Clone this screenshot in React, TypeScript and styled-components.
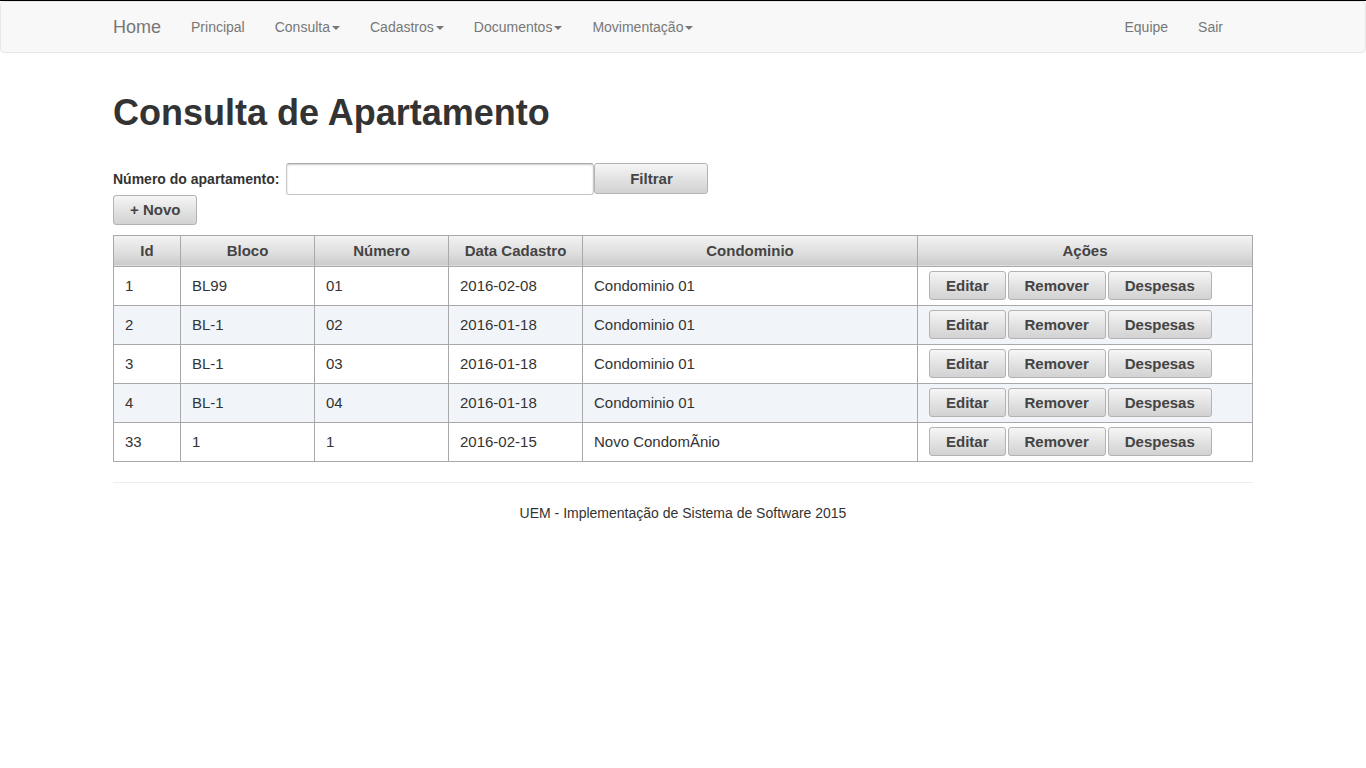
import React from "react";
import styled, { createGlobalStyle } from "styled-components";

const Global = createGlobalStyle`
  html, body { margin: 0; padding: 0; background: #fff; }
  body {
    border-top: 1px solid #000;
    font-family: "Liberation Sans", Arial, Helvetica, sans-serif;
    font-size: 14px;
    line-height: 1.42857;
    color: #333;
  }
  * { box-sizing: border-box; }
`;

const Navbar = styled.nav`
  height: 52px;
  background: #f8f8f8;
  border: 1px solid #e7e7e7;
  border-radius: 4px;
  margin-bottom: 20px;
`;

const NavInner = styled.div`
  width: 1170px;
  margin: 0 auto;
  padding: 0 15px;
  display: flex;
  align-items: center;
  height: 50px;
`;

const Brand = styled.a`
  font-size: 18px;
  line-height: 20px;
  color: #777;
  padding: 15px 15px 15px 0;
`;

const NavList = styled.ul<{ $right?: boolean }>`
  list-style: none;
  margin: 0;
  padding: 0;
  display: flex;
  margin-left: ${(p) => (p.$right ? "auto" : "0")};
  margin-right: ${(p) => (p.$right ? "15px" : "0")};
`;

const NavLink = styled.a`
  display: flex;
  align-items: center;
  padding: 15px;
  line-height: 20px;
  color: #777;
  font-size: 14px;
`;

const Caret = styled.span`
  display: inline-block;
  width: 0;
  height: 0;
  margin-left: 2px;
  margin-top: 1px;
  border-top: 4px solid #777;
  border-left: 4px solid transparent;
  border-right: 4px solid transparent;
`;

const Container = styled.div`
  width: 1170px;
  margin: 0 auto;
  padding: 0 15px;
`;

const Title = styled.h1`
  font-size: 36px;
  line-height: 1.1;
  font-weight: bold;
  margin: 40px 0 10px;
  color: #333;
`;

const FilterForm = styled.form`
  margin-top: 30px;
`;

const FilterRow = styled.div`
  display: flex;
  align-items: flex-start;
`;

const Label = styled.label`
  font-weight: bold;
  font-size: 14px;
  line-height: 20px;
  margin-top: 6px;
  margin-right: 7px;
  white-space: nowrap;
`;

const Input = styled.input`
  width: 308px;
  height: 32px;
  border: 1px solid #c8c8c8;
  border-top-color: #a8a8a8;
  border-radius: 3px;
  box-shadow: inset 0 1px 2px rgba(0, 0, 0, 0.2);
  background: #fff;
  font-family: inherit;
  font-size: 14px;
  padding: 4px 6px;
`;

const Button = styled.button<{ $width?: number; $h?: number }>`
  height: ${(p) => p.$h ?? 29}px;
  ${(p) => (p.$width ? `width: ${p.$width}px;` : "")}
  padding: 0 16px;
  border: 1px solid #b3b3b3;
  border-radius: 3px;
  background: linear-gradient(to bottom, #f6f6f6 0%, #e3e3e3 50%, #d2d2d2 100%);
  font-family: "Liberation Sans", Arial, sans-serif;
  font-weight: bold;
  font-size: 15px;
  color: #444;
  cursor: pointer;
`;

const NovoRow = styled.div`
  margin-top: 0;
`;

const Table = styled.table`
  width: 1140px;
  margin-top: 10px;
  border-collapse: collapse;
  border: 1px solid #a9a9a9;
  font-size: 15px;
`;

const Th = styled.th<{ $w?: number }>`
  ${(p) => (p.$w ? `width: ${p.$w}px;` : "")}
  height: 31px;
  padding: 0 10px;
  border: 1px solid #a9a9a9;
  background: linear-gradient(to bottom, #f3f3f3 0%, #dedede 60%, #cacaca 100%);
  color: #444;
  font-weight: bold;
  text-align: center;
`;

const Tr = styled.tr<{ $striped?: boolean }>`
  background: ${(p) => (p.$striped ? "#f1f5f9" : "#fff")};
`;

const Td = styled.td`
  height: 39px;
  padding: 0 11px;
  border: 1px solid #a9a9a9;
  color: #333;
  vertical-align: middle;
`;

const Actions = styled.div`
  display: flex;
  gap: 2px;
`;

const Hr = styled.hr`
  margin: 20px 0;
  border: 0;
  border-top: 1px solid #eee;
`;

const Footer = styled.footer`
  text-align: center;
  line-height: 20px;
  color: #333;
`;

const rows = [
  ["1", "BL99", "01", "2016-02-08", "Condominio 01"],
  ["2", "BL-1", "02", "2016-01-18", "Condominio 01"],
  ["3", "BL-1", "03", "2016-01-18", "Condominio 01"],
  ["4", "BL-1", "04", "2016-01-18", "Condominio 01"],
  ["33", "1", "1", "2016-02-15", "Novo CondomÃnio"],
];

export default function App() {
  return (
    <>
      <Global />
      <Navbar>
        <NavInner>
          <Brand>Home</Brand>
          <NavList>
            <li><NavLink>Principal</NavLink></li>
            <li><NavLink>Consulta<Caret /></NavLink></li>
            <li><NavLink>Cadastros<Caret /></NavLink></li>
            <li><NavLink>Documentos<Caret /></NavLink></li>
            <li><NavLink>Movimentação<Caret /></NavLink></li>
          </NavList>
          <NavList $right>
            <li><NavLink>Equipe</NavLink></li>
            <li><NavLink>Sair</NavLink></li>
          </NavList>
        </NavInner>
      </Navbar>
      <Container>
        <Title>Consulta de Apartamento</Title>
        <FilterForm>
          <FilterRow>
            <Label>Número do apartamento:</Label>
            <Input type="text" />
            <Button type="button" $width={114} $h={31}>Filtrar</Button>
          </FilterRow>
          <NovoRow>
            <Button type="button" $h={30}>+ Novo</Button>
          </NovoRow>
        </FilterForm>
        <Table>
          <thead>
            <tr>
              <Th $w={67}>Id</Th>
              <Th $w={134}>Bloco</Th>
              <Th $w={134}>Número</Th>
              <Th $w={134}>Data Cadastro</Th>
              <Th $w={335}>Condominio</Th>
              <Th>Ações</Th>
            </tr>
          </thead>
          <tbody>
            {rows.map((r, i) => (
              <Tr key={i} $striped={i % 2 === 1}>
                {r.map((c, j) => (
                  <Td key={j}>{c}</Td>
                ))}
                <Td>
                  <Actions>
                    <Button type="button">Editar</Button>
                    <Button type="button">Remover</Button>
                    <Button type="button">Despesas</Button>
                  </Actions>
                </Td>
              </Tr>
            ))}
          </tbody>
        </Table>
        <Hr />
        <Footer>UEM - Implementação de Sistema de Software 2015</Footer>
      </Container>
    </>
  );
}
